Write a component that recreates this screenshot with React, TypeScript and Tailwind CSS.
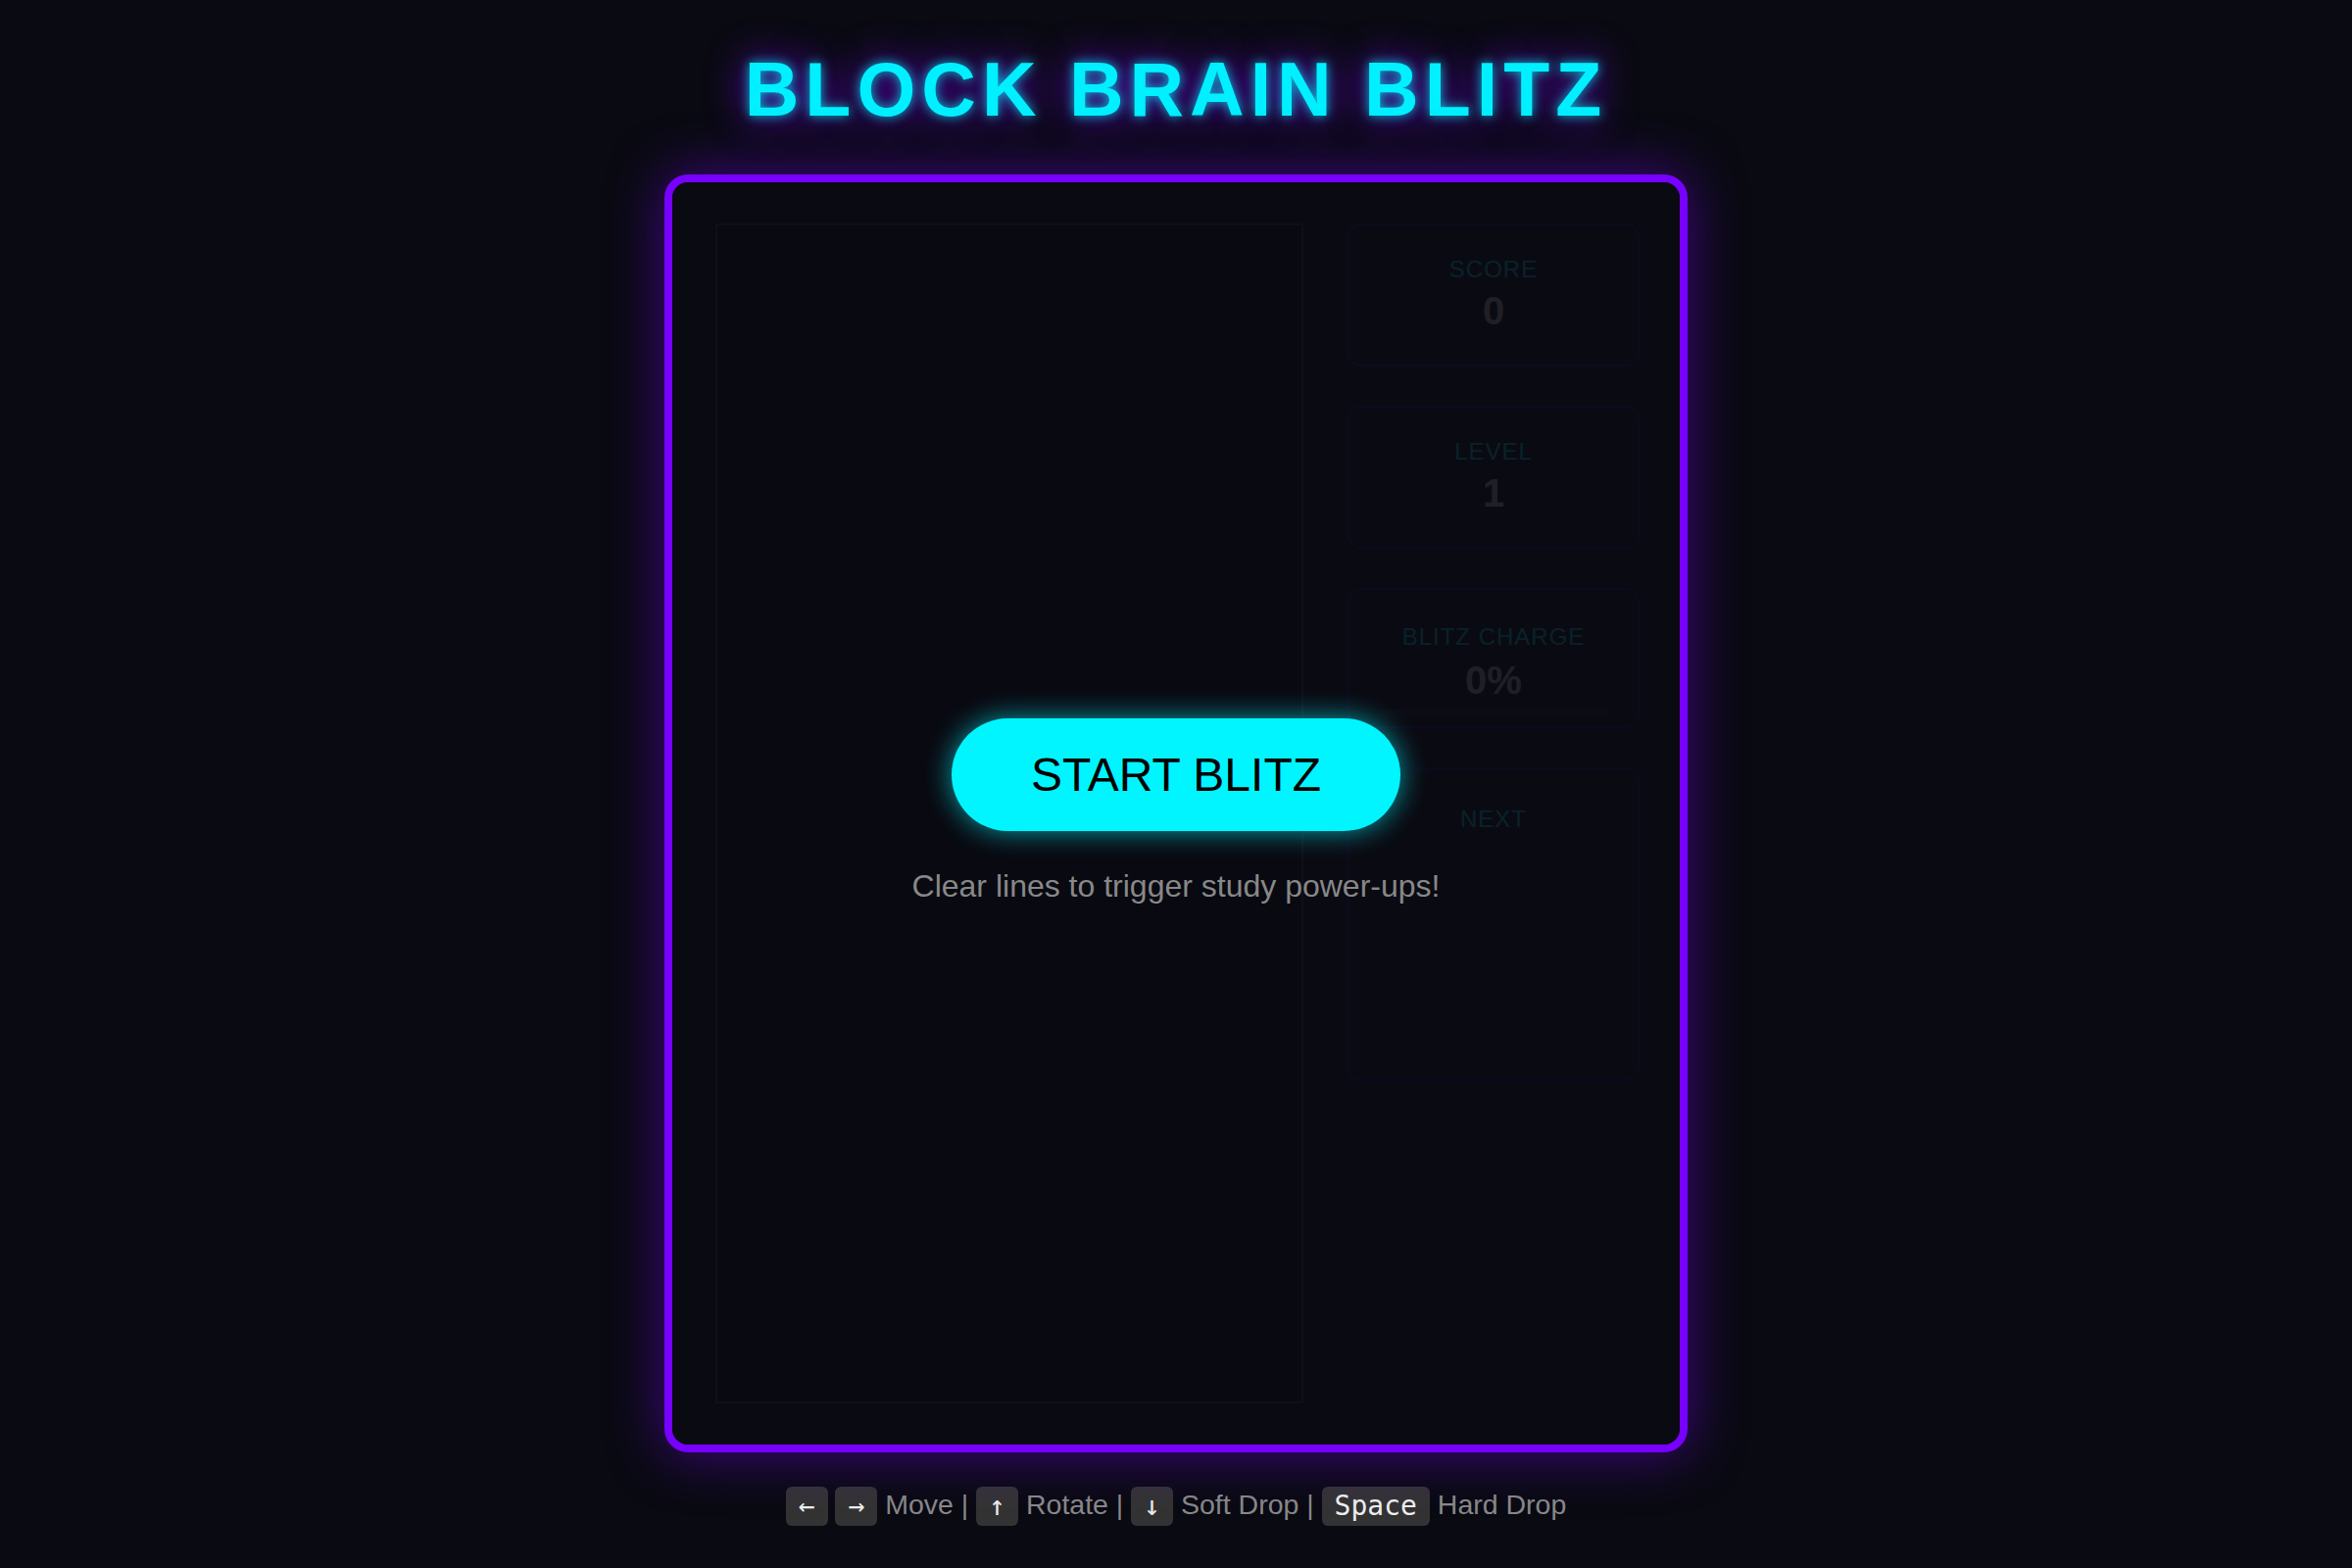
import React from "react";

type Stat = { label: string; value: string };

const stats: Stat[] = [
  { label: "SCORE", value: "0" },
  { label: "LEVEL", value: "1" },
];

function Key({ children }: { children: React.ReactNode }) {
  return (
    <kbd className="inline-block align-middle rounded-[6px] bg-[#333] px-[13px] py-[4px] font-['DejaVu_Sans_Mono',monospace] text-[28px] leading-[32px] text-[#eee]">
      {children}
    </kbd>
  );
}

export default function App() {
  return (
    <main className="min-h-screen bg-[#0a0a12] flex flex-col items-center pt-[47px] pb-10 font-['Liberation_Sans',Arial,sans-serif]">
      <h1 className="text-[77px] font-bold leading-[88px] tracking-[6px] text-[#00f0ff] [text-shadow:0_0_12px_rgba(0,240,255,0.8),0_0_40px_rgba(119,0,255,1)]">
        BLOCK BRAIN BLITZ
      </h1>

      {/* Game frame */}
      <div className="relative mt-[43px] w-[1044px] h-[1304px] rounded-[24px] border-[8px] border-[#7700ff] bg-[#0a0a14] pl-[44px] pr-[41px] py-[42px] flex gap-[45px] shadow-[0_0_55px_rgba(119,0,255,0.5)]">
        {/* Board */}
        <div className="w-[600px] h-[1204px] border-2 border-[#44444f] bg-[#07070d]" />

        {/* Side panels */}
        <div className="w-[298px] flex flex-col gap-[40px]">
          {stats.map(s => (
            <div
              key={s.label}
              className="rounded-[13px] border-2 border-[rgba(119,0,255,0.5)] bg-[rgba(255,255,255,0.03)] pt-[30px] pb-[31px] text-center"
            >
              <div className="text-[24px] leading-[29px] tracking-[1px] text-[#00f0ff]">{s.label}</div>
              <div className="mt-[4px] text-[40px] font-bold leading-[48px] text-[#e0e0e0]">{s.value}</div>
            </div>
          ))}

          <div className="rounded-[13px] border-2 border-[rgba(119,0,255,0.5)] bg-[rgba(255,255,255,0.03)] pt-[33px] pb-[9px] px-[30px] text-center">
            <div className="text-[24px] leading-[29px] tracking-[1px] text-[#00f0ff]">BLITZ CHARGE</div>
            <div className="mt-[6px] text-[40px] font-bold leading-[48px] text-[#e0e0e0]">0%</div>
            <div className="mt-[6px] h-[8px] rounded-full bg-[rgba(255,255,255,0.06)]" />
          </div>

          <div className="rounded-[13px] border-2 border-[rgba(119,0,255,0.5)] bg-[rgba(255,255,255,0.03)] pt-[36px] pb-[33px] text-center">
            <div className="text-[24px] leading-[29px] tracking-[1px] text-[#00f0ff]">NEXT</div>
            <div className="h-[218px]" />
          </div>
        </div>

        {/* Start overlay */}
        <div className="absolute inset-0 rounded-[16px] bg-[rgba(10,10,18,0.9)] flex flex-col items-center justify-center">
          <button className="h-[115px] px-[81px] rounded-full bg-[#00f5ff] text-[48px] leading-[55px] text-black shadow-[0_0_28px_rgba(0,245,255,0.65)]">
            START BLITZ
          </button>
          <p className="mt-[32px] text-[32px] leading-[48px] text-[#888]">Clear lines to trigger study power-ups!</p>
        </div>
      </div>

      {/* Controls */}
      <p className="mt-[33px] text-[28.5px] leading-[40px] text-[#888]">
        <Key>←</Key> <Key>→</Key> Move | <Key>↑</Key> Rotate | <Key>↓</Key> Soft Drop | <Key>Space</Key> Hard Drop
      </p>
    </main>
  );
}
